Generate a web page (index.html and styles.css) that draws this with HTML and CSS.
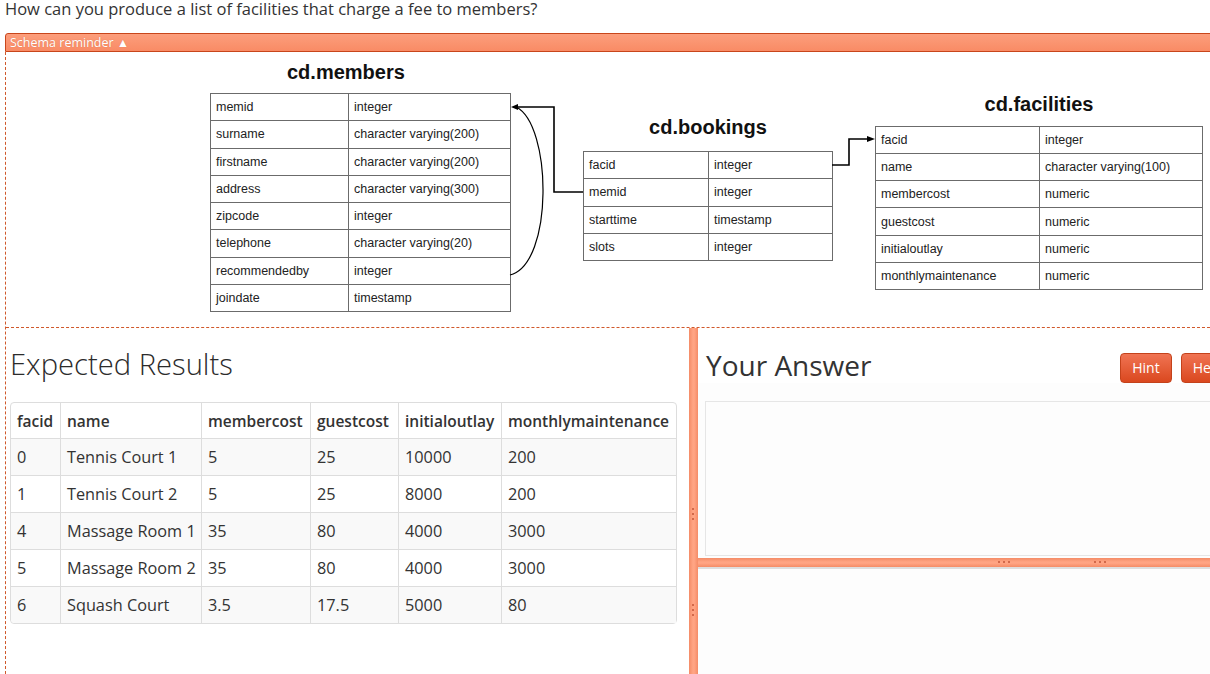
FILE: index.html
```html
<!DOCTYPE html>
<html>
<head>
<meta charset="utf-8">
<title>Exercise</title>
<link rel="stylesheet" href="styles.css">
</head>
<body>
<div class="question">How can you produce a list of facilities that charge a fee to members?</div>
<div class="schema-bar">Schema reminder &#9650;</div>
<div class="content">
  <div class="schema">
    <div class="er-title title-members">cd.members</div>
    <div class="er er-members">
      <div class="c">memid</div><div class="c">integer</div>
      <div class="c">surname</div><div class="c">character varying(200)</div>
      <div class="c">firstname</div><div class="c">character varying(200)</div>
      <div class="c">address</div><div class="c">character varying(300)</div>
      <div class="c">zipcode</div><div class="c">integer</div>
      <div class="c">telephone</div><div class="c">character varying(20)</div>
      <div class="c">recommendedby</div><div class="c">integer</div>
      <div class="c">joindate</div><div class="c">timestamp</div>
    </div>
    <div class="er-title title-bookings">cd.bookings</div>
    <div class="er er-bookings">
      <div class="c">facid</div><div class="c">integer</div>
      <div class="c">memid</div><div class="c">integer</div>
      <div class="c">starttime</div><div class="c">timestamp</div>
      <div class="c">slots</div><div class="c">integer</div>
    </div>
    <div class="er-title title-facilities">cd.facilities</div>
    <div class="er er-facilities">
      <div class="c">facid</div><div class="c">integer</div>
      <div class="c">name</div><div class="c">character varying(100)</div>
      <div class="c">membercost</div><div class="c">numeric</div>
      <div class="c">guestcost</div><div class="c">numeric</div>
      <div class="c">initialoutlay</div><div class="c">numeric</div>
      <div class="c">monthlymaintenance</div><div class="c">numeric</div>
    </div>
    <svg class="links" width="1204" height="275" viewBox="0 0 1204 275">
      <path d="M577 140 H548 V55 H511" fill="none" stroke="#000" stroke-width="1.6"/>
      <path d="M504 223 C548 212 546 72 510 55" fill="none" stroke="#000" stroke-width="1.2"/>
      <path d="M505 55 L512 52 L512 58 Z" fill="#000"/>
      <path d="M826 113 H843 V87 H862" fill="none" stroke="#000" stroke-width="1.6"/>
      <path d="M869 87 L861 84 L861 90 Z" fill="#000"/>
    </svg>
  </div>
  <div class="workspace">
    <div class="pane-left">
      <h2 class="pane-title results-title">Expected Results</h2>
      <table class="results">
        <colgroup><col class="w1"><col class="w2"><col class="w3"><col class="w4"><col class="w5"><col class="w6"></colgroup>
        <thead>
          <tr><th>facid</th><th>name</th><th>membercost</th><th>guestcost</th><th>initialoutlay</th><th>monthlymaintenance</th></tr>
        </thead>
        <tbody>
          <tr><td>0</td><td>Tennis Court 1</td><td>5</td><td>25</td><td>10000</td><td>200</td></tr>
          <tr><td>1</td><td>Tennis Court 2</td><td>5</td><td>25</td><td>8000</td><td>200</td></tr>
          <tr><td>4</td><td>Massage Room 1</td><td>35</td><td>80</td><td>4000</td><td>3000</td></tr>
          <tr><td>5</td><td>Massage Room 2</td><td>35</td><td>80</td><td>4000</td><td>3000</td></tr>
          <tr><td>6</td><td>Squash Court</td><td>3.5</td><td>17.5</td><td>5000</td><td>80</td></tr>
        </tbody>
      </table>
    </div>
    <div class="vsplit">
      <span class="vgrip vgrip-a"><i></i><i></i><i></i></span>
      <span class="vgrip vgrip-b"><i></i><i></i><i></i></span>
    </div>
    <div class="pane-right">
      <div class="answer-head">
        <h2 class="pane-title answer-title">Your Answer</h2>
        <div class="btns">
          <button class="btn">Hint</button>
          <button class="btn">Help</button>
        </div>
      </div>
      <div class="editor"></div>
      <div class="hsplit">
        <span class="hgrip hgrip-a"><i></i><i></i><i></i></span>
        <span class="hgrip hgrip-b"><i></i><i></i><i></i></span>
      </div>
      <div class="output"></div>
    </div>
  </div>
</div>
</body>
</html>
```
FILE: styles.css
```css
html, body {
  margin: 0;
  padding: 0;
  background: #fff;
  overflow: hidden;
}
body {
  width: 1210px;
  height: 674px;
  font-family: "Open Sans", "Noto Sans", sans-serif;
  color: #333;
}
.question {
  padding-left: 5px;
  font-size: 16.5px;
  line-height: 18px;
  height: 18px;
  color: #333;
  white-space: nowrap;
}
.schema-bar {
  margin: 15px -20px 0 5px;
  height: 17px;
  line-height: 17px;
  border: 1px solid #c8461b;
  border-top-left-radius: 3px;
  background: linear-gradient(#fc9e7c, #f98b65);
  color: #fff;
  font-size: 12.5px;
  padding-left: 4px;
  text-shadow: 0 0 1px rgba(160, 50, 10, 0.4);
}
.content {
  margin-left: 5px;
  border-left: 1px dashed #d0582b;
}
.schema {
  position: relative;
  height: 275px;
  border-bottom: 1px dashed #d0582b;
  margin-right: -20px;
  font-family: "Liberation Sans", Arial, sans-serif;
  color: #111;
}
.er-title {
  position: absolute;
  font-size: 20px;
  font-weight: bold;
  line-height: 24px;
  white-space: nowrap;
}
.title-members { left: 281px; top: 8px; }
.title-bookings { left: 577px; width: 250px; text-align: center; top: 63px; }
.title-facilities { left: 869px; width: 328px; text-align: center; top: 40px; }
.er {
  position: absolute;
  display: grid;
  border-top: 1px solid #6b6b6b;
  border-left: 1px solid #6b6b6b;
  grid-auto-rows: 27.25px;
  font-size: 12.5px;
}
.er .c {
  border-right: 1px solid #6b6b6b;
  border-bottom: 1px solid #6b6b6b;
  padding-left: 5px;
  display: flex;
  align-items: center;
  white-space: nowrap;
  color: #222;
}
.er-members { left: 204px; top: 41px; width: 300px; grid-template-columns: 138px 1fr; }
.er-bookings { left: 577px; top: 99px; width: 249px; grid-template-columns: 125px 1fr; }
.er-facilities { left: 869px; top: 74px; width: 327px; grid-template-columns: 164px 1fr; grid-auto-rows: 27.17px; }
.links {
  position: absolute;
  left: 0;
  top: 0;
  pointer-events: none;
}
.workspace {
  display: flex;
  height: 346px;
  width: 1240px;
}
.pane-left {
  width: 679px;
  padding-left: 4px;
  flex: none;
}
.pane-title {
  margin: 19px 0 0 0;
  font-size: 28px;
  line-height: 36px;
  font-weight: 400;
  color: #333;
  white-space: nowrap;
}
.results-title {
  margin-top: 18px;
  font-size: 29.2px;
  font-weight: 300;
  color: #2b2b2b;
}
.results {
  margin-top: 20px;
  border-collapse: separate;
  border-spacing: 0;
  table-layout: fixed;
  width: 667px;
  border: 1px solid #dddddd;
  border-radius: 4px;
  font-size: 16.3px;
  color: #333;
}
.w1 { width: 49px; }
.w2 { width: 141px; }
.w3 { width: 109px; }
.w4 { width: 88px; }
.w5 { width: 103px; }
.w6 { width: 175px; }
.results th, .results td {
  text-align: left;
  padding: 0 6px;
  white-space: nowrap;
  border-left: 1px solid #dddddd;
  border-top: 1px solid #dddddd;
}
.results th:first-child, .results td:first-child { border-left: none; }
.results th {
  height: 35px;
  font-weight: 600;
  font-size: 15.5px;
  border-top: none;
}
.results td { height: 36px; }
.results tbody tr:nth-child(odd) td { background: #f9f9f9; }
.results tbody tr:last-child td:first-child { border-bottom-left-radius: 4px; }
.vsplit {
  position: relative;
  width: 9px;
  flex: none;
  background: linear-gradient(to right, #f48c67, #ffa584 45%, #ffa382 60%, #f48c67);
}
.vgrip {
  position: absolute;
  left: 3px;
  display: flex;
  flex-direction: column;
  gap: 3px;
}
.vgrip i, .hgrip i {
  display: block;
  width: 2px;
  height: 2px;
  background: #d2694a;
}
.vgrip-a { top: 180px; }
.vgrip-b { top: 276px; }
.pane-right {
  width: 537px;
  flex: none;
  background: #fdfdfd;
}
.answer-head {
  display: flex;
  align-items: flex-start;
  padding: 0 0 0 8px;
  background: #fff;
}
.btns {
  margin-left: auto;
  margin-top: 25px;
  display: flex;
  gap: 9px;
}
.btn {
  height: 30px;
  padding: 0 11px;
  border: 1px solid #c4421b;
  border-radius: 4px;
  background: linear-gradient(#f07453, #da481f);
  color: #fff;
  font-family: "Open Sans", "Noto Sans", sans-serif;
  font-size: 14px;
  line-height: 28px;
}
.editor {
  margin: 18px 0 0 7px;
  height: 153px;
  border: 1px solid #e6e6e6;
  border-right: none;
  background: #fdfdfd;
}
.hsplit {
  position: relative;
  margin-top: 2px;
  height: 9px;
  background: linear-gradient(#f48c67, #ffa584 45%, #ffa382 60%, #f48c67);
  border-bottom: 2px solid #dedede;
}
.hgrip {
  position: absolute;
  top: 3px;
  display: flex;
  gap: 3px;
}
.hgrip-a { left: 300px; }
.hgrip-b { left: 396px; }
.output {
  background: #fdfdfd;
}
```
